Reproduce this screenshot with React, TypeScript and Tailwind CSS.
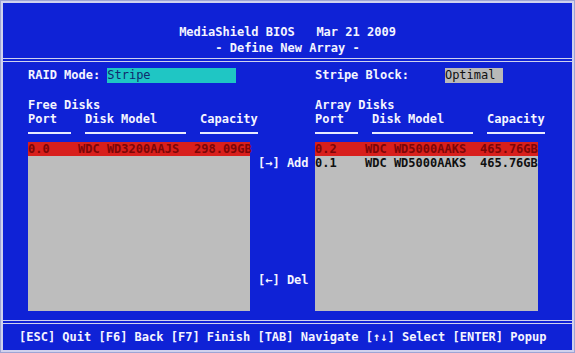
const freeDisks = [{ port: "0.0", model: "WDC WD3200AAJS", cap: "298.09GB", sel: true }];

const arrayDisks = [
  { port: "0.2", model: "WDC WD5000AAKS", cap: "465.76GB", sel: true },
  { port: "0.1", model: "WDC WD5000AAKS", cap: "465.76GB", sel: false },
];

function ColumnHeads() {
  return (
    <>
      <div className="flex h-[14px] items-center whitespace-nowrap">
        <span className="w-[57px] shrink-0">Port</span>
        <span className="w-[115px] shrink-0">Disk Model</span>
        <span className="shrink-0">Capacity</span>
      </div>
      <div className="mt-[6px] flex h-[2px]">
        <div className="w-[43px] shrink-0 bg-[#e8eaff]" />
        <div className="ml-[14px] w-[101px] shrink-0 bg-[#e8eaff]" />
        <div className="ml-[14px] w-[58px] shrink-0 bg-[#e8eaff]" />
      </div>
    </>
  );
}

function DiskList({ disks, modelW }: { disks: typeof freeDisks; modelW: string }) {
  return (
    <div className="h-[169px] bg-[#bdbdbd]">
      {disks.map((d) => (
        <div
          key={d.port}
          className={`flex h-[14px] items-center whitespace-nowrap ${d.sel ? "bg-[#d81f1c] text-[#7c0606]" : "text-[#101010]"}`}
        >
          <span className="w-[50px] shrink-0">{d.port}</span>
          <span className={`${modelW} shrink-0`}>{d.model}</span>
          <span className="shrink-0">{d.cap}</span>
        </div>
      ))}
    </div>
  );
}

export default function App() {
  return (
    <div
      className="h-[353px] w-[575px] bg-[#9ea4d4] p-[1px] text-[12px] font-bold leading-[14px] text-[#f4f4ff]"
      style={{ fontFamily: '"DejaVu Sans Mono", "Liberation Mono", monospace' }}
    >
      <div className="flex h-full flex-col border-2 border-[#d0d2ee] bg-[#0f22d6]">
        {/* header */}
        <div className="flex h-[55px] shrink-0 flex-col items-center pt-[21px] leading-[16px]">
          <div className="whitespace-pre">MediaShield BIOS   Mar 21 2009</div>
          <div>- Define New Array -</div>
        </div>
        <div className="h-[4px] shrink-0 border-y border-[#d0d2ee]" />

        {/* body */}
        <div className="flex h-[258px] shrink-0 px-[25px] pt-[6px]">
          <div className="w-[222px] shrink-0">
            <div className="flex h-[14px] items-center">
              <span>RAID Mode:</span>
              <span className="ml-[7px] flex h-[15px] w-[129px] items-center bg-[#1fc6c4] font-normal text-[#102a6e]">
                Stripe
              </span>
            </div>
            <div className="mt-[16px] h-[14px]">Free Disks</div>
            <ColumnHeads />
            <div className="mt-[8px]">
              <DiskList disks={freeDisks} modelW="w-[116px]" />
            </div>
          </div>

          <div className="flex w-[65px] shrink-0 flex-col pl-[8px] pt-[88px]">
            <div className="h-[14px] whitespace-pre">[→] Add</div>
            <div className="mt-[103px] h-[14px] whitespace-pre">[←] Del</div>
          </div>

          <div className="w-[223px] shrink-0">
            <div className="flex h-[14px] items-center">
              <span>Stripe Block:</span>
              <span className="ml-[36px] flex h-[15px] w-[58px] items-center bg-[#b9b9b9] font-normal text-[#101010]">
                Optimal
              </span>
            </div>
            <div className="mt-[16px] h-[14px]">Array Disks</div>
            <ColumnHeads />
            <div className="mt-[8px]">
              <DiskList disks={arrayDisks} modelW="w-[115px]" />
            </div>
          </div>
        </div>

        {/* footer */}
        <div className="h-[4px] shrink-0 border-y border-[#d0d2ee]" />
        <div className="flex flex-1 items-center whitespace-pre pl-[16px]">
          [ESC] Quit [F6] Back [F7] Finish [TAB] Navigate [↑↓] Select [ENTER] Popup
        </div>
      </div>
    </div>
  );
}
